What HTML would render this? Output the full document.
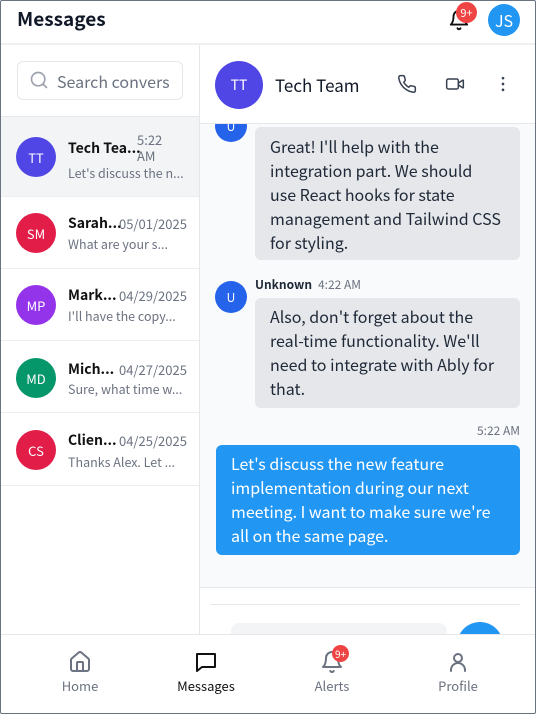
<!DOCTYPE html>
<html><head><meta charset="utf-8"><style>
*{box-sizing:border-box;margin:0;padding:0}
body{width:536px;height:714px;overflow:hidden;font-family:"Noto Sans CJK SC","Liberation Sans",sans-serif;background:#fff;position:relative;color:#111827}
.a{position:absolute}
.av{position:absolute;border-radius:50%;color:#fff;display:flex;align-items:center;justify-content:center;font-size:13px}
.row{position:absolute;left:1px;width:198px;border-bottom:1px solid #eceef1}
.nm{position:absolute;left:68px;font-size:14px;font-weight:bold;color:#111}
.tm{position:absolute;left:119px;font-size:13px;color:#6b7280}
.pv{position:absolute;left:68px;font-size:12.5px;color:#6b7280;white-space:nowrap}
.bub{position:absolute;font-size:16px;line-height:24px;border-radius:6px}
svg{position:absolute}
</style></head><body>
<div class="a" style="inset:0;border:1px solid #6b7280;border-radius:2px;z-index:9;pointer-events:none"></div>
<div class="a" style="left:17px;top:5px;font-size:19px;font-weight:bold">Messages</div>
<svg style="left:448px;top:8px" width="22" height="24" viewBox="0 0 24 24" fill="none" stroke="#111" stroke-width="2" stroke-linecap="round" stroke-linejoin="round"><path d="M6 8a6 6 0 0 1 12 0c0 7 3 9 3 9H3s3-2 3-9"/><path d="M10.3 21a1.94 1.94 0 0 0 3.4 0"/></svg>
<div class="av" style="left:456px;top:2px;width:21px;height:21px;background:#ef4444;font-size:11px">9+</div>
<div class="av" style="left:488px;top:4px;width:32px;height:32px;background:#2196f3;font-size:16px">JS</div>
<div class="a" style="left:0;top:43px;width:536px;height:2px;background:#eef0f2"></div>
<div class="a" style="left:199px;top:45px;width:1px;height:590px;background:#e5e7eb"></div>
<div class="a" style="left:17px;top:61px;width:166px;height:39px;border:1px solid #e5e7eb;border-radius:6px"></div>
<svg style="left:29px;top:70px" width="20" height="20" viewBox="0 0 24 24" fill="none" stroke="#9ca3af" stroke-width="2" stroke-linecap="round"><circle cx="11" cy="11" r="8"/><path d="m21 21-4.3-4.3"/></svg>
<div class="a" style="left:57px;top:69px;font-size:16px;color:#6b7280">Search convers</div>
<div class="a" style="left:1px;top:116px;width:198px;height:1px;background:#e5e7eb"></div>
<div class="row" style="top:117px;height:80px;background:#f3f4f6"></div>
<div class="av" style="left:16px;top:137px;width:40px;height:40px;background:#4f46e5">TT</div>
<div class="nm" style="top:138px">Tech Tea...</div>
<div class="a" style="left:137px;top:132px;font-size:13px;color:#6b7280;line-height:16px">5:22<br>AM</div>
<div class="pv" style="top:163px">Let's discuss the n...</div>

<div class="row" style="top:197px;height:72px"></div>
<div class="av" style="left:16px;top:213px;width:40px;height:40px;background:#e11d48">SM</div>
<div class="nm" style="top:213px">Sarah...</div><div class="tm" style="top:214px">05/01/2025</div>
<div class="pv" style="top:234px">What are your s...</div>

<div class="row" style="top:269px;height:72px"></div>
<div class="av" style="left:16px;top:285px;width:40px;height:40px;background:#9333ea">MP</div>
<div class="nm" style="top:285px">Mark...</div><div class="tm" style="top:286px">04/29/2025</div>
<div class="pv" style="top:306px">I'll have the copy...</div>

<div class="row" style="top:341px;height:72px"></div>
<div class="av" style="left:16px;top:358px;width:40px;height:40px;background:#059669">MD</div>
<div class="nm" style="top:359px">Mich...</div><div class="tm" style="top:360px">04/27/2025</div>
<div class="pv" style="top:379px">Sure, what time w...</div>

<div class="row" style="top:413px;height:73px"></div>
<div class="av" style="left:16px;top:430px;width:40px;height:40px;background:#e11d48">CS</div>
<div class="nm" style="top:430px">Clien...</div><div class="tm" style="top:431px">04/25/2025</div>
<div class="pv" style="top:452px">Thanks Alex. Let ...</div>

<div class="a" style="left:200px;top:124px;width:336px;height:463px;background:#f9fafb"></div>
<div class="av" style="left:215px;top:110px;width:32px;height:32px;background:#2563eb;font-size:12px">U</div>
<div class="bub" style="left:255px;top:127px;width:265px;height:133px;background:#e5e7eb;padding:7px 19px 8px 15px;color:#1f2937">Great! I'll help with the integration part. We should use React hooks for state management and Tailwind CSS for styling.</div>
<div class="a" style="left:200px;top:45px;width:336px;height:79px;background:#fff;border-bottom:1px solid #e5e7eb"></div>
<div class="av" style="left:215px;top:61px;width:48px;height:48px;background:#4f46e5;font-size:14px">TT</div>
<div class="a" style="left:275px;top:72px;font-size:17px">Tech Team</div>
<svg style="left:397px;top:74px" width="20" height="20" viewBox="0 0 24 24" fill="none" stroke="#374151" stroke-width="1.8" stroke-linecap="round" stroke-linejoin="round"><path d="M22 16.9v3a2 2 0 0 1-2.2 2 19.8 19.8 0 0 1-8.6-3.1 19.5 19.5 0 0 1-6-6A19.8 19.8 0 0 1 2.1 4.2 2 2 0 0 1 4.1 2h3a2 2 0 0 1 2 1.7c.1 1 .4 1.9.7 2.8a2 2 0 0 1-.5 2.1L8.1 9.9a16 16 0 0 0 6 6l1.3-1.3a2 2 0 0 1 2.1-.4c.9.3 1.8.6 2.8.7a2 2 0 0 1 1.7 2z"/></svg>
<svg style="left:445px;top:74px" width="20" height="20" viewBox="0 0 24 24" fill="none" stroke="#374151" stroke-width="1.8" stroke-linecap="round" stroke-linejoin="round"><path d="m16 13 5.2 3.5a.5.5 0 0 0 .8-.4V7.9a.5.5 0 0 0-.8-.4L16 11"/><rect x="2" y="6" width="14" height="12" rx="2"/></svg>
<svg style="left:493px;top:74px" width="20" height="20" viewBox="0 0 24 24" fill="#374151"><circle cx="12" cy="5" r="1.6"/><circle cx="12" cy="12" r="1.6"/><circle cx="12" cy="19" r="1.6"/></svg>

<div class="av" style="left:215px;top:281px;width:32px;height:32px;background:#2563eb;font-size:12px">U</div>
<div class="a" style="left:255px;top:276px;font-size:12px;font-weight:bold;color:#1f2937">Unknown</div>
<div class="a" style="left:318px;top:276px;font-size:12px;color:#6b7280">4:22 AM</div>
<div class="bub" style="left:255px;top:298px;width:265px;height:110px;background:#e5e7eb;padding:6px 15px;color:#1f2937">Also, don't forget about the real-time functionality. We'll need to integrate with Ably for that.</div>
<div class="a" style="left:460px;top:422px;width:60px;text-align:right;font-size:12px;color:#6b7280">5:22 AM</div>
<div class="bub" style="left:216px;top:445px;width:304px;height:110px;background:#2196f3;padding:6px 15px;color:#fff">Let's discuss the new feature implementation during our next meeting. I want to make sure we're all on the same page.</div>

<div class="a" style="left:200px;top:587px;width:336px;height:1px;background:#e5e7eb"></div>
<div class="a" style="left:210px;top:604px;width:310px;height:1px;background:#e5e7eb"></div>
<div class="a" style="left:231px;top:623px;width:216px;height:30px;background:#f3f4f6;border-radius:8px"></div>
<div class="a" style="left:457px;top:622px;width:46px;height:46px;border-radius:50%;background:#2196f3"></div>

<div class="a" style="left:0;top:634px;width:536px;height:80px;background:#fff;border-top:1px solid #e5e7eb"></div>
<svg style="left:68px;top:650px" width="24" height="24" viewBox="0 0 24 24" fill="none" stroke="#6b7280" stroke-width="2" stroke-linecap="round" stroke-linejoin="round"><path d="M15 21v-8a1 1 0 0 0-1-1h-4a1 1 0 0 0-1 1v8"/><path d="M3 10a2 2 0 0 1 .7-1.5l7-6a2 2 0 0 1 2.6 0l7 6a2 2 0 0 1 .7 1.5v9a2 2 0 0 1-2 2H5a2 2 0 0 1-2-2z"/></svg>
<div class="a" style="left:40px;top:676px;width:80px;text-align:center;font-size:13px;color:#6b7280">Home</div>
<svg style="left:194px;top:650px" width="24" height="24" viewBox="0 0 24 24" fill="none" stroke="#111" stroke-width="2" stroke-linecap="round" stroke-linejoin="round"><path d="M3 4h18v13H8l-5 4z"/></svg>
<div class="a" style="left:166px;top:676px;width:80px;text-align:center;font-size:13px;color:#111">Messages</div>
<svg style="left:320px;top:650px" width="24" height="24" viewBox="0 0 24 24" fill="none" stroke="#6b7280" stroke-width="2" stroke-linecap="round" stroke-linejoin="round"><path d="M6 8a6 6 0 0 1 12 0c0 7 3 9 3 9H3s3-2 3-9"/><path d="M10.3 21a1.94 1.94 0 0 0 3.4 0"/></svg>
<div class="av" style="left:332px;top:645px;width:17px;height:17px;background:#ef4444;font-size:10px">9+</div>
<div class="a" style="left:292px;top:676px;width:80px;text-align:center;font-size:13px;color:#6b7280">Alerts</div>
<svg style="left:446px;top:650px" width="24" height="24" viewBox="0 0 24 24" fill="none" stroke="#6b7280" stroke-width="2" stroke-linecap="round" stroke-linejoin="round"><circle cx="12" cy="8" r="4"/><path d="M5 21v-1a7 7 0 0 1 14 0v1"/></svg>
<div class="a" style="left:418px;top:676px;width:80px;text-align:center;font-size:13px;color:#6b7280">Profile</div>
</body></html>
